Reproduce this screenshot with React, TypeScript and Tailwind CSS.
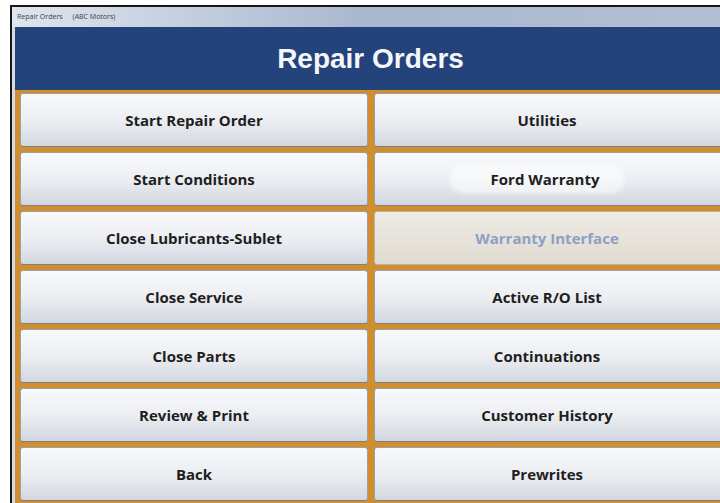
const buttons: { label: string; disabled?: boolean; glow?: boolean }[] = [
  { label: "Start Repair Order" },
  { label: "Utilities" },
  { label: "Start Conditions" },
  { label: "Ford Warranty", glow: true },
  { label: "Close Lubricants-Sublet" },
  { label: "Warranty Interface", disabled: true },
  { label: "Close Service" },
  { label: "Active R/O List" },
  { label: "Close Parts" },
  { label: "Continuations" },
  { label: "Review & Print" },
  { label: "Customer History" },
  { label: "Back" },
  { label: "Prewrites" },
];

function MenuButton({ label, disabled, glow, right }: { label: string; disabled?: boolean; glow?: boolean; right?: boolean }) {
  if (disabled) {
    return (
      <div className={`flex items-center justify-center rounded-[3px] border border-[#b9b2a4] bg-gradient-to-b from-[#eeebe5] to-[#e0dbd1] text-[15px] font-bold text-[#8d9fc6] ${right ? "pr-[6px]" : ""}`}>
        {label}
      </div>
    );
  }
  return (
    <button className={`flex items-center justify-center rounded-[3px] border border-[#9b9fa6] border-b-[#7d7f84] bg-gradient-to-b from-[#f8f9fb] via-[#eceef2] to-[#d2d7df] text-[15px] font-bold text-[#1e1e1e] ${right ? "pr-[6px]" : ""}`}>
      {glow ? (
        <span className="-ml-5 rounded-full bg-white/50 py-[2px] pl-10 pr-6 shadow-[0_0_4px_2px_rgba(255,255,255,0.45)]">{label}</span>
      ) : (
        label
      )}
    </button>
  );
}

export default function App() {
  return (
    <div className="h-[503px] w-[720px] overflow-hidden bg-white pl-[10px] pt-[5px]" style={{ fontFamily: "'Open Sans', sans-serif" }}>
      <div className="flex h-full flex-col border-l-2 border-t-2 border-[#161616] bg-[#d6dbe3]">
        {/* window title bar */}
        <div className="flex h-[20px] shrink-0 items-center gap-[10px] bg-gradient-to-r from-[#dfe5ee] via-[#a9b7cf] to-[#b2bfd4] pl-[5px] text-[7px] text-[#3c3c3c]">
          <span>Repair Orders</span>
          <span>(ABC Motors)</span>
        </div>
        <div className="flex flex-1 flex-col pl-[3px]">
          <div
            className="flex h-[63px] shrink-0 items-center justify-center bg-[#24437a] pl-[6px] text-[28px] font-bold text-[#f4f6fa]"
            style={{ fontFamily: "'Liberation Sans', Arial, sans-serif" }}
          >
            Repair Orders
          </div>
          {/* right column runs past the window edge */}
          <div className="grid flex-1 grid-cols-[348px_352px] grid-rows-7 gap-x-[6px] gap-y-[5px] bg-[#d18e2e] pb-[2px] pl-[5px] pt-[3px]">
            {buttons.map((b, i) => (
              <MenuButton key={b.label} {...b} right={i % 2 === 1} />
            ))}
          </div>
        </div>
      </div>
    </div>
  );
}
